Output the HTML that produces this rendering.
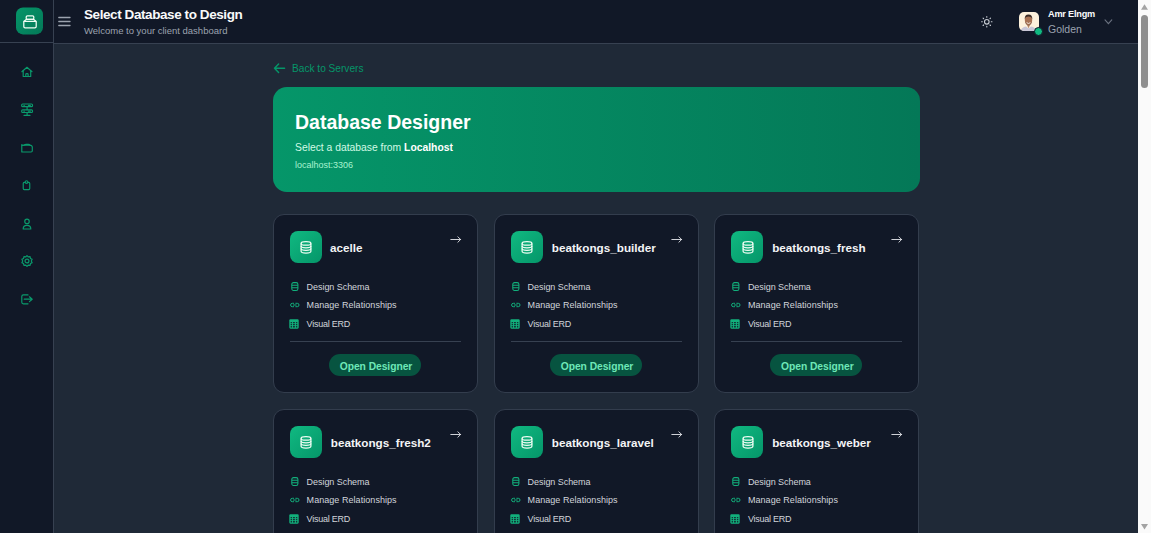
<!DOCTYPE html>
<html>
<head>
<meta charset="utf-8">
<style>
*{box-sizing:border-box;margin:0;padding:0}
html,body{width:1151px;height:533px;overflow:hidden}
body{background:#1f2937;font-family:"Liberation Sans",sans-serif;position:relative;color:#fff}
.abs{position:absolute}
.t{white-space:nowrap;position:absolute;line-height:1}
#sidebar{left:0;top:0;width:54px;height:533px;background:#111827;border-right:1px solid #374151}
#logoarea{left:0;top:0;width:53px;height:43px;border-bottom:1px solid #374151}
#logo{left:16px;top:7px;transform:translateY(0.4px);width:27px;height:27px;border-radius:7px;background:linear-gradient(135deg,#059669,#047857)}
#header{left:54px;top:0;width:1084px;height:44px;background:#111827;border-bottom:1px solid #374151}
#scroll{left:1138px;top:0;width:13px;height:533px;background:#fafafa}
.navi{position:absolute;left:19px;width:16px;height:16px}
#hero{left:273px;top:87px;width:647px;height:105px;border-radius:14px;background:linear-gradient(90deg,#059669,#047857)}
.card{position:absolute;width:205px;height:179px;background:#111827;border:1px solid #333d4d;border-radius:11px}
.ib{position:absolute;left:16px;top:16px;width:32px;height:32px;border-radius:8px;background:linear-gradient(135deg,#10b981,#059669)}
.ib svg{position:absolute;left:0;top:0}
.ct{position:absolute;left:56px;top:26.7px;font-weight:700;font-size:11.7px;color:#f3f4f6;white-space:nowrap;line-height:1}
.arr{position:absolute;left:175.6px;top:21px;width:12px;height:8px}
.fi{position:absolute}
.ft{position:absolute;left:32.6px;font-size:9px;color:#d1d5db;white-space:nowrap;line-height:1}
.sep{position:absolute;left:16px;width:171px;top:126px;height:1px;background:#374151}
.btn{position:absolute;top:139px;height:22px;border-radius:11px;background:#075440;color:#6ee7b7;font-weight:700;font-size:10.3px;line-height:25.4px;letter-spacing:-0.05px;padding-left:2px;text-align:center;white-space:nowrap}

</style>
</head>
<body>
<div id="sidebar" class="abs"></div>
<div id="logoarea" class="abs"></div>
<div id="logo" class="abs">
  <svg width="27" height="27" viewBox="0 0 27 27" style="position:absolute;left:0;top:0" fill="none" stroke="#f0fdf4" stroke-width="1.25" stroke-linejoin="round">
    <rect x="10.2" y="8.4" width="7.6" height="3.6" rx="1.2"/>
    <path d="M10.2 12 L7.8 14 V19.2 Q7.8 20.5 9.1 20.5 H18.9 Q20.2 20.5 20.2 19.2 V14 L17.8 12 Z"/>
    <line x1="7.8" y1="14" x2="20.2" y2="14"/>
  </svg>
</div>
<svg class="navi" style="top:64.4px" viewBox="-0.6 -0.6 17.2 17.2" fill="none" stroke="#0a9a6c" stroke-width="1.25" stroke-linecap="round" stroke-linejoin="round"><path d="M2.5 7.7 L7.95 2.9 L13.4 7.7"/><path d="M3.9 6.6 V12.8 H12 V6.6"/><path d="M6.7 12.8 V10.6 Q6.7 9.7 7.6 9.7 H8.3 Q9.2 9.7 9.2 10.6 V12.8"/></svg>
<svg class="navi" style="top:102.0px" viewBox="-0.6 -0.6 17.2 17.2" fill="none" stroke="#0a9a6c" stroke-width="1.25" stroke-linecap="round" stroke-linejoin="round"><rect x="2.3" y="1.55" width="11.6" height="2.75" rx="1"/><rect x="2.3" y="7.8" width="11.6" height="2.9" rx="1"/><path d="M8.1 4.4 V7.7 M8.1 10.8 V13.8 M4.8 13.8 H11.2"/><path d="M4.7 2.95 H5.1 M4.7 9.25 H5.1 M9.5 2.95 H11.6 M9.5 9.25 H11.6"/></svg>
<svg class="navi" style="top:140.0px" viewBox="-0.6 -0.6 17.2 17.2" fill="none" stroke="#0a9a6c" stroke-width="1.25" stroke-linecap="round" stroke-linejoin="round"><path d="M2.4 12.3 V4.2 M2.4 5 H4.8 Q5.6 4.1 7.2 4.1 H9.4 Q10.8 4.1 11.4 5 Q13.7 5.1 13.7 7.2 V11 Q13.7 12.3 12.4 12.3 H3.6 Q2.4 12.3 2.4 11.1"/><path d="M2.6 5 H12.4"/></svg>
<svg class="navi" style="top:177.2px" viewBox="-0.6 -0.6 17.2 17.2" fill="none" stroke="#0a9a6c" stroke-width="1.25" stroke-linecap="round" stroke-linejoin="round"><rect x="3.95" y="5.2" width="7" height="7.7" rx="1.1"/><circle cx="7.5" cy="4.8" r="1.4" fill="#111827"/></svg>
<svg class="navi" style="top:216.0px" viewBox="-0.6 -0.6 17.2 17.2" fill="none" stroke="#0a9a6c" stroke-width="1.25" stroke-linecap="round" stroke-linejoin="round"><circle cx="8" cy="5.2" r="2.4"/><path d="M3.9 13.4 Q3.9 9.5 8 9.5 Q12.1 9.5 12.1 13.4 Z"/></svg>
<svg class="navi" style="top:253.0px" viewBox="-0.6 -0.6 17.2 17.2" fill="none" stroke="#0a9a6c" stroke-width="1.25" stroke-linecap="round" stroke-linejoin="round"><circle cx="8" cy="8" r="2.1"/><path d="M8 2.2 L9.3 3.6 L11.3 3.3 L11.7 5.2 L13.5 6.2 L12.6 8 L13.5 9.8 L11.7 10.8 L11.3 12.7 L9.3 12.4 L8 13.8 L6.7 12.4 L4.7 12.7 L4.3 10.8 L2.5 9.8 L3.4 8 L2.5 6.2 L4.3 5.2 L4.7 3.3 L6.7 3.6 Z"/></svg>
<svg class="navi" style="top:290.7px" viewBox="-0.6 -0.6 17.2 17.2" fill="none" stroke="#0a9a6c" stroke-width="1.25" stroke-linecap="round" stroke-linejoin="round"><path d="M9.1 3.6 H4.1 Q2.4 3.6 2.4 5.3 V11.5 Q2.4 13.2 4.1 13.2 H9.1"/><path d="M5 8.2 H13.6 M10.6 5.6 L13.6 8.2 L10.6 10.8"/></svg>
<div id="header" class="abs"></div>
<svg class="abs" style="left:57px;top:15px" width="16" height="13" viewBox="0 0 16 13" stroke="#9ca3af" stroke-width="1.3" stroke-linecap="round"><path d="M1.8 2.5 H13 M1.8 6.5 H13 M1.8 10.5 H13"/></svg>
<div class="t" style="left:84px;top:8.2px;font-size:13.5px;font-weight:700;letter-spacing:-0.42px;color:#f9fafb">Select Database to Design</div>
<div class="t" style="left:84px;top:26.3px;font-size:9.5px;color:#9ca3af">Welcome to your client dashboard</div>

<svg class="abs" style="left:979px;top:14px" width="16" height="16" viewBox="0 0 16 16" fill="none" stroke="#c9cdd4" stroke-width="1.1" stroke-linecap="round"><circle cx="7.8" cy="7.8" r="2.3"/><path d="M7.8 2.6 V3.3 M7.8 12.3 V13 M2.6 7.8 H3.3 M12.3 7.8 H13 M4.1 4.1 L4.6 4.6 M11 11 L11.5 11.5 M4.1 11.5 L4.6 11 M11 4.6 L11.5 4.1"/></svg>
<div class="abs" style="left:1019px;top:12px;width:20px;height:19px;border-radius:5px;background:#fdf1dc;overflow:hidden">
  <svg width="20" height="19" viewBox="0 0 20 19"><path d="M1.5 19 Q2.5 15.2 7 14.6 L9.5 16.5 L12 14.6 Q16.5 15.2 17.5 19 Z" fill="#c8c6d6"/><path d="M7.6 12 L9.5 16.2 L11.4 12 Z" fill="#b98566"/><ellipse cx="9.5" cy="8" rx="3.7" ry="5" fill="#a87254"/><path d="M5.7 7.6 Q5.4 2.6 9.5 2.5 Q13.6 2.6 13.3 7.6 Q12.8 4.8 9.5 4.6 Q6.2 4.8 5.7 7.6 Z" fill="#3a2a24"/><path d="M7.6 10.6 Q9.5 12.4 11.4 10.6" stroke="#f5efe6" stroke-width="0.9" fill="none"/><path d="M6.4 10 Q6.8 13.2 9.5 13.3 Q12.2 13.2 12.6 10" stroke="#6b4a3a" stroke-width="0.6" fill="none" opacity="0.7"/></svg>
</div>
<div class="abs" style="left:1033.7px;top:26.6px;width:9px;height:9px;border-radius:50%;background:#10b981;border:1.2px solid #111827"></div>
<div class="t" style="left:1048px;top:9.6px;font-size:9.2px;font-weight:700;letter-spacing:-0.22px;color:#f9fafb">Amr Elngm</div>
<div class="t" style="left:1048px;top:23.5px;font-size:10.5px;color:#9ca3af">Golden</div>
<svg class="abs" style="left:1103px;top:18px" width="11" height="8" viewBox="0 0 11 8" fill="none" stroke="#6b7280" stroke-width="1.1" stroke-linecap="round"><path d="M2 1.8 L5.4 5.6 L8.8 1.8"/></svg>

<svg class="abs" style="left:272px;top:62px" width="16" height="13" viewBox="0 0 16 13" fill="none" stroke="#059669" stroke-width="1.45" stroke-linecap="round" stroke-linejoin="round"><path d="M2.5 6.3 H12.6 M6.6 2.1 L2.5 6.3 L6.6 10.5"/></svg>
<div class="t" style="left:292px;top:64.2px;font-size:10.15px;color:#059669">Back to Servers</div>

<div id="hero" class="abs">
  <div class="t" style="left:22px;top:26px;font-size:19.5px;font-weight:700;color:#ffffff">Database Designer</div>
  <div class="t" style="left:22px;top:56.3px;font-size:10.34px;color:#d1fae5">Select a database from <b style="color:#fff">Localhost</b></div>
  <div class="t" style="left:22px;top:73.8px;font-size:9px;color:#a7f3d0">localhost:3306</div>
</div>

<div class="card" style="left:273px;top:214px">
  <div class="ib"><svg style="left:0.3px" width="32" height="32" viewBox="0 0 32 32" fill="none" stroke="#f0fdf4" stroke-width="1.25"><ellipse cx="16" cy="12.4" rx="4.9" ry="1.8"/><path d="M11.1 12.4 V20.2 Q11.1 22 16 22 Q20.9 22 20.9 20.2 V12.4"/><path d="M11.1 15 Q11.1 16.8 16 16.8 Q20.9 16.8 20.9 15 M11.1 17.6 Q11.1 19.4 16 19.4 Q20.9 19.4 20.9 17.6"/></svg></div>
  <div class="ct" style="left:56px">acelle</div>
  <svg class="arr" viewBox="0 0 12 8" fill="none" stroke="#e5e7eb" stroke-width="0.9" stroke-linecap="round" stroke-linejoin="round"><path d="M0.8 3.5 H10.6 M7.9 0.8 L10.6 3.5 L7.9 6.2"/></svg>
  <svg class="fi" style="left:16.5px;top:67px" width="8" height="9" viewBox="0 0 8 9" fill="none" stroke="#12b07c" stroke-width="1.05"><rect x="0.8" y="0.6" width="6.1" height="7.8" rx="1.7"/><path d="M0.8 3.3 H6.9 M0.8 5.8 H6.9"/></svg>
  <span class="ft" style="top:68.4px;letter-spacing:-0.05px">Design Schema</span>
  <svg class="fi" style="left:16px;top:87px" width="10" height="6" viewBox="0 0 10 6" fill="none" stroke="#12b07c" stroke-width="1" stroke-linecap="round"><path d="M3.6 1.3 H2.3 Q0.6 1.3 0.6 3 Q0.6 4.7 2.3 4.7 H3.6 M5.8 1.3 H7.3 Q9 1.3 9 3 Q9 4.7 7.3 4.7 H5.8 M3.4 3 H6.2"/></svg>
  <span class="ft" style="top:86.2px;letter-spacing:0.05px">Manage Relationships</span>
  <svg class="fi" style="left:15px;top:104px" width="10" height="10" viewBox="0 0 10 10"><rect x="0.3" y="0.3" width="9.4" height="9.4" rx="1.1" fill="#12b07c"/><g fill="#111827" opacity="0.85"><rect x="1.55" y="3.01" width="1.5" height="1.3" rx="0.5"/><rect x="3.95" y="3.01" width="2.0" height="1.3" rx="0.5"/><rect x="6.85" y="3.01" width="1.5" height="1.3" rx="0.5"/><rect x="1.55" y="5.05" width="1.5" height="1.3" rx="0.5"/><rect x="3.95" y="5.05" width="2.0" height="1.3" rx="0.5"/><rect x="6.85" y="5.05" width="1.5" height="1.3" rx="0.5"/><rect x="1.55" y="7.10" width="1.5" height="1.3" rx="0.5"/><rect x="3.95" y="7.10" width="2.0" height="1.3" rx="0.5"/><rect x="6.85" y="7.10" width="1.5" height="1.3" rx="0.5"/></g></svg>
  <span class="ft" style="top:104.8px;letter-spacing:-0.25px">Visual ERD</span>
  <div class="sep"></div>
  <div class="btn" style="left:55px;width:92px">Open Designer</div>
</div>
<div class="card" style="left:494px;top:214px">
  <div class="ib"><svg style="left:0.3px" width="32" height="32" viewBox="0 0 32 32" fill="none" stroke="#f0fdf4" stroke-width="1.25"><ellipse cx="16" cy="12.4" rx="4.9" ry="1.8"/><path d="M11.1 12.4 V20.2 Q11.1 22 16 22 Q20.9 22 20.9 20.2 V12.4"/><path d="M11.1 15 Q11.1 16.8 16 16.8 Q20.9 16.8 20.9 15 M11.1 17.6 Q11.1 19.4 16 19.4 Q20.9 19.4 20.9 17.6"/></svg></div>
  <div class="ct" style="left:56.8px">beatkongs_builder</div>
  <svg class="arr" viewBox="0 0 12 8" fill="none" stroke="#e5e7eb" stroke-width="0.9" stroke-linecap="round" stroke-linejoin="round"><path d="M0.8 3.5 H10.6 M7.9 0.8 L10.6 3.5 L7.9 6.2"/></svg>
  <svg class="fi" style="left:16.5px;top:67px" width="8" height="9" viewBox="0 0 8 9" fill="none" stroke="#12b07c" stroke-width="1.05"><rect x="0.8" y="0.6" width="6.1" height="7.8" rx="1.7"/><path d="M0.8 3.3 H6.9 M0.8 5.8 H6.9"/></svg>
  <span class="ft" style="top:68.4px;letter-spacing:-0.05px">Design Schema</span>
  <svg class="fi" style="left:16px;top:87px" width="10" height="6" viewBox="0 0 10 6" fill="none" stroke="#12b07c" stroke-width="1" stroke-linecap="round"><path d="M3.6 1.3 H2.3 Q0.6 1.3 0.6 3 Q0.6 4.7 2.3 4.7 H3.6 M5.8 1.3 H7.3 Q9 1.3 9 3 Q9 4.7 7.3 4.7 H5.8 M3.4 3 H6.2"/></svg>
  <span class="ft" style="top:86.2px;letter-spacing:0.05px">Manage Relationships</span>
  <svg class="fi" style="left:15px;top:104px" width="10" height="10" viewBox="0 0 10 10"><rect x="0.3" y="0.3" width="9.4" height="9.4" rx="1.1" fill="#12b07c"/><g fill="#111827" opacity="0.85"><rect x="1.55" y="3.01" width="1.5" height="1.3" rx="0.5"/><rect x="3.95" y="3.01" width="2.0" height="1.3" rx="0.5"/><rect x="6.85" y="3.01" width="1.5" height="1.3" rx="0.5"/><rect x="1.55" y="5.05" width="1.5" height="1.3" rx="0.5"/><rect x="3.95" y="5.05" width="2.0" height="1.3" rx="0.5"/><rect x="6.85" y="5.05" width="1.5" height="1.3" rx="0.5"/><rect x="1.55" y="7.10" width="1.5" height="1.3" rx="0.5"/><rect x="3.95" y="7.10" width="2.0" height="1.3" rx="0.5"/><rect x="6.85" y="7.10" width="1.5" height="1.3" rx="0.5"/></g></svg>
  <span class="ft" style="top:104.8px;letter-spacing:-0.25px">Visual ERD</span>
  <div class="sep"></div>
  <div class="btn" style="left:55px;width:92px">Open Designer</div>
</div>
<div class="card" style="left:714.33px;top:214px;width:204.67px">
  <div class="ib"><svg style="left:0.9px" width="32" height="32" viewBox="0 0 32 32" fill="none" stroke="#f0fdf4" stroke-width="1.25"><ellipse cx="16" cy="12.4" rx="4.9" ry="1.8"/><path d="M11.1 12.4 V20.2 Q11.1 22 16 22 Q20.9 22 20.9 20.2 V12.4"/><path d="M11.1 15 Q11.1 16.8 16 16.8 Q20.9 16.8 20.9 15 M11.1 17.6 Q11.1 19.4 16 19.4 Q20.9 19.4 20.9 17.6"/></svg></div>
  <div class="ct" style="left:56.8px">beatkongs_fresh</div>
  <svg class="arr" viewBox="0 0 12 8" fill="none" stroke="#e5e7eb" stroke-width="0.9" stroke-linecap="round" stroke-linejoin="round"><path d="M0.8 3.5 H10.6 M7.9 0.8 L10.6 3.5 L7.9 6.2"/></svg>
  <svg class="fi" style="left:16.5px;top:67px" width="8" height="9" viewBox="0 0 8 9" fill="none" stroke="#12b07c" stroke-width="1.05"><rect x="0.8" y="0.6" width="6.1" height="7.8" rx="1.7"/><path d="M0.8 3.3 H6.9 M0.8 5.8 H6.9"/></svg>
  <span class="ft" style="top:68.4px;letter-spacing:-0.05px">Design Schema</span>
  <svg class="fi" style="left:16px;top:87px" width="10" height="6" viewBox="0 0 10 6" fill="none" stroke="#12b07c" stroke-width="1" stroke-linecap="round"><path d="M3.6 1.3 H2.3 Q0.6 1.3 0.6 3 Q0.6 4.7 2.3 4.7 H3.6 M5.8 1.3 H7.3 Q9 1.3 9 3 Q9 4.7 7.3 4.7 H5.8 M3.4 3 H6.2"/></svg>
  <span class="ft" style="top:86.2px;letter-spacing:0.05px">Manage Relationships</span>
  <svg class="fi" style="left:15px;top:104px" width="10" height="10" viewBox="0 0 10 10"><rect x="0.3" y="0.3" width="9.4" height="9.4" rx="1.1" fill="#12b07c"/><g fill="#111827" opacity="0.85"><rect x="1.55" y="3.01" width="1.5" height="1.3" rx="0.5"/><rect x="3.95" y="3.01" width="2.0" height="1.3" rx="0.5"/><rect x="6.85" y="3.01" width="1.5" height="1.3" rx="0.5"/><rect x="1.55" y="5.05" width="1.5" height="1.3" rx="0.5"/><rect x="3.95" y="5.05" width="2.0" height="1.3" rx="0.5"/><rect x="6.85" y="5.05" width="1.5" height="1.3" rx="0.5"/><rect x="1.55" y="7.10" width="1.5" height="1.3" rx="0.5"/><rect x="3.95" y="7.10" width="2.0" height="1.3" rx="0.5"/><rect x="6.85" y="7.10" width="1.5" height="1.3" rx="0.5"/></g></svg>
  <span class="ft" style="top:104.8px;letter-spacing:-0.25px">Visual ERD</span>
  <div class="sep"></div>
  <div class="btn" style="left:55px;width:92px">Open Designer</div>
</div>
<div class="card" style="left:273px;top:409px">
  <div class="ib"><svg style="left:0.3px" width="32" height="32" viewBox="0 0 32 32" fill="none" stroke="#f0fdf4" stroke-width="1.25"><ellipse cx="16" cy="12.4" rx="4.9" ry="1.8"/><path d="M11.1 12.4 V20.2 Q11.1 22 16 22 Q20.9 22 20.9 20.2 V12.4"/><path d="M11.1 15 Q11.1 16.8 16 16.8 Q20.9 16.8 20.9 15 M11.1 17.6 Q11.1 19.4 16 19.4 Q20.9 19.4 20.9 17.6"/></svg></div>
  <div class="ct" style="left:56.8px">beatkongs_fresh2</div>
  <svg class="arr" viewBox="0 0 12 8" fill="none" stroke="#e5e7eb" stroke-width="0.9" stroke-linecap="round" stroke-linejoin="round"><path d="M0.8 3.5 H10.6 M7.9 0.8 L10.6 3.5 L7.9 6.2"/></svg>
  <svg class="fi" style="left:16.5px;top:67px" width="8" height="9" viewBox="0 0 8 9" fill="none" stroke="#12b07c" stroke-width="1.05"><rect x="0.8" y="0.6" width="6.1" height="7.8" rx="1.7"/><path d="M0.8 3.3 H6.9 M0.8 5.8 H6.9"/></svg>
  <span class="ft" style="top:68.4px;letter-spacing:-0.05px">Design Schema</span>
  <svg class="fi" style="left:16px;top:87px" width="10" height="6" viewBox="0 0 10 6" fill="none" stroke="#12b07c" stroke-width="1" stroke-linecap="round"><path d="M3.6 1.3 H2.3 Q0.6 1.3 0.6 3 Q0.6 4.7 2.3 4.7 H3.6 M5.8 1.3 H7.3 Q9 1.3 9 3 Q9 4.7 7.3 4.7 H5.8 M3.4 3 H6.2"/></svg>
  <span class="ft" style="top:86.2px;letter-spacing:0.05px">Manage Relationships</span>
  <svg class="fi" style="left:15px;top:104px" width="10" height="10" viewBox="0 0 10 10"><rect x="0.3" y="0.3" width="9.4" height="9.4" rx="1.1" fill="#12b07c"/><g fill="#111827" opacity="0.85"><rect x="1.55" y="3.01" width="1.5" height="1.3" rx="0.5"/><rect x="3.95" y="3.01" width="2.0" height="1.3" rx="0.5"/><rect x="6.85" y="3.01" width="1.5" height="1.3" rx="0.5"/><rect x="1.55" y="5.05" width="1.5" height="1.3" rx="0.5"/><rect x="3.95" y="5.05" width="2.0" height="1.3" rx="0.5"/><rect x="6.85" y="5.05" width="1.5" height="1.3" rx="0.5"/><rect x="1.55" y="7.10" width="1.5" height="1.3" rx="0.5"/><rect x="3.95" y="7.10" width="2.0" height="1.3" rx="0.5"/><rect x="6.85" y="7.10" width="1.5" height="1.3" rx="0.5"/></g></svg>
  <span class="ft" style="top:104.8px;letter-spacing:-0.25px">Visual ERD</span>
  <div class="sep"></div>
  <div class="btn" style="left:55px;width:92px">Open Designer</div>
</div>
<div class="card" style="left:494px;top:409px">
  <div class="ib"><svg style="left:0.3px" width="32" height="32" viewBox="0 0 32 32" fill="none" stroke="#f0fdf4" stroke-width="1.25"><ellipse cx="16" cy="12.4" rx="4.9" ry="1.8"/><path d="M11.1 12.4 V20.2 Q11.1 22 16 22 Q20.9 22 20.9 20.2 V12.4"/><path d="M11.1 15 Q11.1 16.8 16 16.8 Q20.9 16.8 20.9 15 M11.1 17.6 Q11.1 19.4 16 19.4 Q20.9 19.4 20.9 17.6"/></svg></div>
  <div class="ct" style="left:56.8px">beatkongs_laravel</div>
  <svg class="arr" viewBox="0 0 12 8" fill="none" stroke="#e5e7eb" stroke-width="0.9" stroke-linecap="round" stroke-linejoin="round"><path d="M0.8 3.5 H10.6 M7.9 0.8 L10.6 3.5 L7.9 6.2"/></svg>
  <svg class="fi" style="left:16.5px;top:67px" width="8" height="9" viewBox="0 0 8 9" fill="none" stroke="#12b07c" stroke-width="1.05"><rect x="0.8" y="0.6" width="6.1" height="7.8" rx="1.7"/><path d="M0.8 3.3 H6.9 M0.8 5.8 H6.9"/></svg>
  <span class="ft" style="top:68.4px;letter-spacing:-0.05px">Design Schema</span>
  <svg class="fi" style="left:16px;top:87px" width="10" height="6" viewBox="0 0 10 6" fill="none" stroke="#12b07c" stroke-width="1" stroke-linecap="round"><path d="M3.6 1.3 H2.3 Q0.6 1.3 0.6 3 Q0.6 4.7 2.3 4.7 H3.6 M5.8 1.3 H7.3 Q9 1.3 9 3 Q9 4.7 7.3 4.7 H5.8 M3.4 3 H6.2"/></svg>
  <span class="ft" style="top:86.2px;letter-spacing:0.05px">Manage Relationships</span>
  <svg class="fi" style="left:15px;top:104px" width="10" height="10" viewBox="0 0 10 10"><rect x="0.3" y="0.3" width="9.4" height="9.4" rx="1.1" fill="#12b07c"/><g fill="#111827" opacity="0.85"><rect x="1.55" y="3.01" width="1.5" height="1.3" rx="0.5"/><rect x="3.95" y="3.01" width="2.0" height="1.3" rx="0.5"/><rect x="6.85" y="3.01" width="1.5" height="1.3" rx="0.5"/><rect x="1.55" y="5.05" width="1.5" height="1.3" rx="0.5"/><rect x="3.95" y="5.05" width="2.0" height="1.3" rx="0.5"/><rect x="6.85" y="5.05" width="1.5" height="1.3" rx="0.5"/><rect x="1.55" y="7.10" width="1.5" height="1.3" rx="0.5"/><rect x="3.95" y="7.10" width="2.0" height="1.3" rx="0.5"/><rect x="6.85" y="7.10" width="1.5" height="1.3" rx="0.5"/></g></svg>
  <span class="ft" style="top:104.8px;letter-spacing:-0.25px">Visual ERD</span>
  <div class="sep"></div>
  <div class="btn" style="left:55px;width:92px">Open Designer</div>
</div>
<div class="card" style="left:714.33px;top:409px;width:204.67px">
  <div class="ib"><svg style="left:0.9px" width="32" height="32" viewBox="0 0 32 32" fill="none" stroke="#f0fdf4" stroke-width="1.25"><ellipse cx="16" cy="12.4" rx="4.9" ry="1.8"/><path d="M11.1 12.4 V20.2 Q11.1 22 16 22 Q20.9 22 20.9 20.2 V12.4"/><path d="M11.1 15 Q11.1 16.8 16 16.8 Q20.9 16.8 20.9 15 M11.1 17.6 Q11.1 19.4 16 19.4 Q20.9 19.4 20.9 17.6"/></svg></div>
  <div class="ct" style="left:56.8px">beatkongs_weber</div>
  <svg class="arr" viewBox="0 0 12 8" fill="none" stroke="#e5e7eb" stroke-width="0.9" stroke-linecap="round" stroke-linejoin="round"><path d="M0.8 3.5 H10.6 M7.9 0.8 L10.6 3.5 L7.9 6.2"/></svg>
  <svg class="fi" style="left:16.5px;top:67px" width="8" height="9" viewBox="0 0 8 9" fill="none" stroke="#12b07c" stroke-width="1.05"><rect x="0.8" y="0.6" width="6.1" height="7.8" rx="1.7"/><path d="M0.8 3.3 H6.9 M0.8 5.8 H6.9"/></svg>
  <span class="ft" style="top:68.4px;letter-spacing:-0.05px">Design Schema</span>
  <svg class="fi" style="left:16px;top:87px" width="10" height="6" viewBox="0 0 10 6" fill="none" stroke="#12b07c" stroke-width="1" stroke-linecap="round"><path d="M3.6 1.3 H2.3 Q0.6 1.3 0.6 3 Q0.6 4.7 2.3 4.7 H3.6 M5.8 1.3 H7.3 Q9 1.3 9 3 Q9 4.7 7.3 4.7 H5.8 M3.4 3 H6.2"/></svg>
  <span class="ft" style="top:86.2px;letter-spacing:0.05px">Manage Relationships</span>
  <svg class="fi" style="left:15px;top:104px" width="10" height="10" viewBox="0 0 10 10"><rect x="0.3" y="0.3" width="9.4" height="9.4" rx="1.1" fill="#12b07c"/><g fill="#111827" opacity="0.85"><rect x="1.55" y="3.01" width="1.5" height="1.3" rx="0.5"/><rect x="3.95" y="3.01" width="2.0" height="1.3" rx="0.5"/><rect x="6.85" y="3.01" width="1.5" height="1.3" rx="0.5"/><rect x="1.55" y="5.05" width="1.5" height="1.3" rx="0.5"/><rect x="3.95" y="5.05" width="2.0" height="1.3" rx="0.5"/><rect x="6.85" y="5.05" width="1.5" height="1.3" rx="0.5"/><rect x="1.55" y="7.10" width="1.5" height="1.3" rx="0.5"/><rect x="3.95" y="7.10" width="2.0" height="1.3" rx="0.5"/><rect x="6.85" y="7.10" width="1.5" height="1.3" rx="0.5"/></g></svg>
  <span class="ft" style="top:104.8px;letter-spacing:-0.25px">Visual ERD</span>
  <div class="sep"></div>
  <div class="btn" style="left:55px;width:92px">Open Designer</div>
</div>

<div id="scroll" class="abs">
  <svg class="abs" style="left:0;top:0" width="13" height="533" viewBox="0 0 13 533"><path d="M3 9.8 L6.5 4.2 L10 9.8 Z" fill="#a3a3a3"/><rect x="3" y="15" width="7" height="73" rx="3.5" fill="#8f8f8f"/><path d="M3 524 L6.5 529.6 L10 524 Z" fill="#a3a3a3"/></svg>
</div>

</body>
</html>
